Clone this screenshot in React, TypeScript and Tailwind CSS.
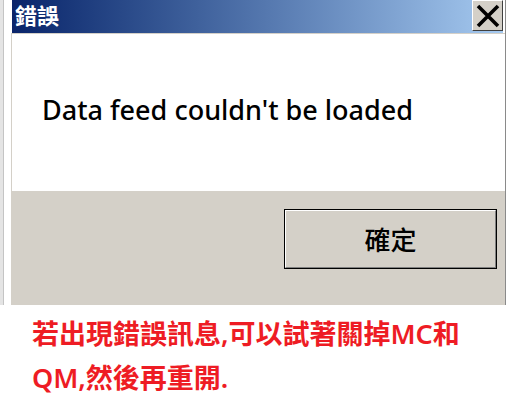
import React from "react";

export default function App() {
  return (
    <div className="w-[511px] h-[411px] bg-white overflow-hidden flex flex-col" style={{ fontFamily: '"Noto Sans", "Noto Sans CJK TC", sans-serif' }}>
      <div className="flex h-[305px]">
        {/* left window edge */}
        <div className="w-[3px] bg-[#e4e4e4]" />
        <div className="w-px bg-[#c4c4c4]" />
        <div className="w-[7px] bg-white" />
        {/* dialog */}
        <div className="w-[495px] flex flex-col">
          <div className="flex h-[33px]">
            <div className="w-px bg-white" />
            <div className="w-[491px] h-[33px] bg-gradient-to-r from-[#0a246a] to-[#a6caf0] flex items-start justify-between">
              <span className="text-white font-bold text-[22px] leading-[24px] pl-[3px] pt-[2px]" style={{ fontFamily: '"Noto Sans CJK TC", sans-serif' }}>錯誤</span>
              <div className="w-[31px] h-[31px] bg-[#d4d0c8] border-l border-t border-l-white border-t-white border-r border-b border-r-[#404040] border-b-[#404040] flex items-center justify-center">
                <svg width="26" height="26" viewBox="0 0 26 26">
                  <path d="M3 3 L23 23 M23 3 L3 23" stroke="#000" strokeWidth="3.6" />
                </svg>
              </div>
            </div>
            <div className="w-[2px] bg-white" />
            <div className="w-px bg-[#8a8a8a]" />
          </div>
          <div className="flex h-[158px]">
            <div className="w-px bg-[#d4d0c8]" />
            <div className="flex-1 border-t border-[#d4d0c8] bg-white pl-[30px] pt-[62px]">
              <span className="text-black text-[27px] leading-none font-medium">Data feed couldn't be loaded</span>
            </div>
            <div className="w-px bg-[#8a8a8a]" />
          </div>
          <div className="flex h-[114px]">
            <div className="flex-1 bg-[#d4d0c8] flex justify-end items-start pt-[18px] pr-[8px]">
              <div className="w-[213px] h-[60px] border border-black bg-[#d4d0c8]">
                <div className="w-full h-full border-l border-t border-white border-r border-b border-r-[#808080] border-b-[#808080] flex items-center justify-center">
                  <span className="text-black text-[26px] leading-none font-medium" style={{ fontFamily: '"Noto Sans CJK TC", sans-serif' }}>確定</span>
                </div>
              </div>
            </div>
            <div className="w-px bg-[#8a8a8a]" />
          </div>
        </div>
      </div>
      <div className="pl-[32px] pt-[7px] text-[#ee1c24] text-[27px] leading-[44px] font-semibold" style={{ fontFamily: '"Noto Sans", "Noto Sans CJK TC", sans-serif' }}>
        <div>若出現錯誤訊息,可以試著關掉MC和</div>
        <div>QM,然後再重開.</div>
      </div>
    </div>
  );
}
